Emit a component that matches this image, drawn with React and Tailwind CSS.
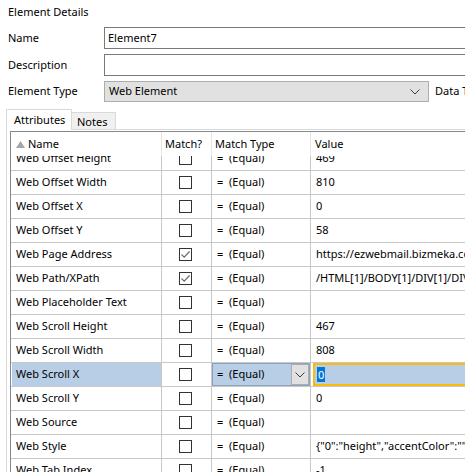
import React from "react";

const rows = [
  { name: "Web Offset Height", value: "469" },
  { name: "Web Offset Width", value: "810" },
  { name: "Web Offset X", value: "0" },
  { name: "Web Offset Y", value: "58" },
  { name: "Web Page Address", value: "https://ezwebmail.bizmeka.com/mail/index.do", checked: true },
  { name: "Web Path/XPath", value: "/HTML[1]/BODY[1]/DIV[1]/DIV[1]/DIV[2]", checked: true },
  { name: "Web Placeholder Text", value: "" },
  { name: "Web Scroll Height", value: "467" },
  { name: "Web Scroll Width", value: "808" },
  { name: "Web Scroll X", value: "0", selected: true },
  { name: "Web Scroll Y", value: "0" },
  { name: "Web Source", value: "" },
  { name: "Web Style", value: '{"0":"height","accentColor":"","alignContent":"normal"}' },
  { name: "Web Tab Index", value: "-1" },
];

const Chevron = () => (
  <svg width="10" height="6" viewBox="0 0 10 6" fill="none">
    <path d="M0.5 0.5L5 5L9.5 0.5" stroke="#404040" strokeWidth="1" />
  </svg>
);

const Checkbox = ({ checked }) => (
  <div className="w-[13px] h-[13px] border border-[#333333] bg-white flex items-center justify-center">
    {checked && (
      <svg width="11" height="11" viewBox="0 0 11 11" fill="none">
        <path d="M1.5 5.5L4.2 8.2L9.5 2.5" stroke="#6b6b6b" strokeWidth="1.2" />
      </svg>
    )}
  </div>
);

const Row = ({ row }) => (
  <div className="flex h-[24px] border-b border-[#c8c8c8]">
    <div
      className={`shrink-0 border-r border-[#c8c8c8] flex items-center whitespace-nowrap ${
        row.selected ? "bg-[#b8cde6] ml-px pl-[4px] w-[150px]" : "pl-[5px] w-[151px]"
      }`}
    >
      {row.name}
    </div>
    <div className="w-[50px] shrink-0 border-r border-[#c8c8c8] flex items-center justify-center pr-[2px]">
      <Checkbox checked={row.checked} />
    </div>
    {row.selected ? (
      <>
        <div className="w-[99px] shrink-0 border-r border-[#c8c8c8] flex items-center">
          <div className="w-[98px] h-[23px] border border-[#8da2bd] bg-[#b8cde6] flex items-center">
            <span className="pl-[4px] flex-1 whitespace-pre">{"=  (Equal)"}</span>
            <div className="w-[18px] h-[21px] bg-[#e1e1e1] border border-[#adadad] flex items-center justify-center">
              <Chevron />
            </div>
          </div>
        </div>
        <div className="w-[300px] shrink-0 pl-[2px] flex items-center">
          <div className="w-full h-[23px] border-2 border-[#f8bd0c] bg-[#b8cde6] flex items-center pl-[2px]">
            <span className="bg-[#0078d7] text-white leading-[15px] px-px">0</span>
          </div>
        </div>
      </>
    ) : (
      <>
        <div className="w-[99px] shrink-0 border-r border-[#c8c8c8] pl-[5px] flex items-center whitespace-pre">
          {"=  (Equal)"}
        </div>
        <div className="w-[300px] shrink-0 pl-[5px] flex items-center whitespace-nowrap overflow-hidden">
          {row.value}
        </div>
      </>
    )}
  </div>
);

export default function App() {
  return (
    <div className="w-[465px] h-[472px] overflow-hidden bg-white text-[11px] text-black font-['Noto_Sans',sans-serif]">
      <div className="mt-[3px] h-[18px] leading-[18px] pl-[8px]">Element Details</div>

      <div className="mt-[6px] flex items-center h-[22px]">
        <div className="w-[104px] shrink-0 pl-[8px]">Name</div>
        <div className="w-[400px] shrink-0 h-[22px] border border-[#7a7a7a] flex items-center pl-[3px]">Element7</div>
      </div>
      <div className="mt-[5px] flex items-center h-[22px]">
        <div className="w-[104px] shrink-0 pl-[8px]">Description</div>
        <div className="w-[400px] shrink-0 h-[22px] border border-[#7a7a7a]" />
      </div>
      <div className="mt-[5px] flex items-center h-[21px] whitespace-nowrap">
        <div className="w-[104px] shrink-0 pl-[8px]">Element Type</div>
        <div className="w-[325px] shrink-0 h-[21px] border border-[#adadad] bg-[#e1e1e1] flex items-center pl-[4px] pr-[8px]">
          <span className="flex-1">Web Element</span>
          <Chevron />
        </div>
        <div className="ml-[6px]">Data Type</div>
      </div>

      <div className="mt-[6px] flex items-end pl-[6px] h-[21px]">
        <div className="relative z-10 w-[66px] h-[21px] -mb-px bg-white border border-b-0 border-[#d9d9d9] pl-[7px] pt-[2px]">
          Attributes
        </div>
        <div className="w-[44px] h-[17px] bg-[#f0f0f0] border border-l-0 border-b-0 border-[#d9d9d9] pl-[5px] leading-[18px]">
          Notes
        </div>
      </div>

      <div className="ml-[6px] border-l border-t border-[#d9d9d9] pt-px pl-[3px] h-[400px]">
        <div className="border-l border-t border-[#828790] h-full">
          <div className="flex h-[24px] bg-white relative z-10">
            <div className="w-[151px] shrink-0 border-r border-[#e5e5e5] pl-[5px] flex items-center gap-[3px]">
              <svg width="9" height="7" viewBox="0 0 9 7">
                <path d="M4.5 0L9 7H0Z" fill="#a6a6a6" />
              </svg>
              <span>Name</span>
            </div>
            <div className="w-[50px] shrink-0 border-r border-[#e5e5e5] pl-[3px] flex items-center">Match?</div>
            <div className="w-[99px] shrink-0 border-r border-[#e5e5e5] pl-[3px] flex items-center">Match Type</div>
            <div className="pl-[4px] flex items-center">Value</div>
          </div>
          <div className="h-[330px] overflow-hidden">
            <div className="-mt-[9px]">
              {rows.map((r) => (
                <Row key={r.name} row={r} />
              ))}
            </div>
          </div>
        </div>
      </div>
    </div>
  );
}
